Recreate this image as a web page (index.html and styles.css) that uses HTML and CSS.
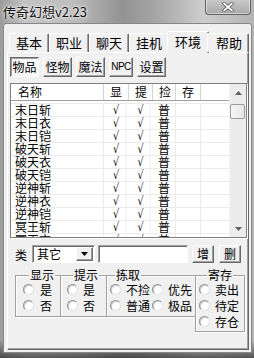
FILE: index.html
```html
<!DOCTYPE html>
<html lang="zh-CN">
<head>
    <meta charset="UTF-8">
    <title>传奇幻想v2.23</title>
    <link rel="stylesheet" href="styles.css">
</head>
<body>
<div class="win">
    <div class="titlebar">
        <span class="title">传奇幻想v2.23</span>
        <span class="close">
            <svg width="12" height="10" viewBox="0 0 12 10">
                <path d="M2 1.5 L10 8.5 M10 1.5 L2 8.5" stroke="#555" stroke-width="3.4" stroke-linecap="square"/>
                <path d="M2 1.5 L10 8.5 M10 1.5 L2 8.5" stroke="#fff" stroke-width="1.8" stroke-linecap="square"/>
            </svg>
        </span>
    </div>

    <div class="client">
        <div class="tabs">
            <div class="tab">基本</div>
            <div class="tab">职业</div>
            <div class="tab">聊天</div>
            <div class="tab">挂机</div>
            <div class="tab on">环境</div>
            <div class="tab last">帮助</div>
        </div>

        <div class="page">
            <div class="subtabs">
                <div class="sbtn on">物品</div>
                <div class="sbtn">怪物</div>
                <div class="sbtn">魔法</div>
                <div class="sbtn npc">NPC</div>
                <div class="sbtn">设置</div>
            </div>

            <div class="list">
                <div class="grid">
                    <div class="head">
                        <div class="c name">名称</div>
                        <div class="c col1">显</div>
                        <div class="c col2">提</div>
                        <div class="c col3">捡</div>
                        <div class="c col4">存</div>
                        <div class="c rest"></div>
                    </div>
                    <div class="rows" id="rows"></div>
                </div>
                <div class="sb">
                    <div class="arrow">
                        <svg width="7" height="4" viewBox="0 0 7 4"><path d="M0 4 L3.5 0 L7 4 Z" fill="#606060"/></svg>
                    </div>
                    <div class="thumb"></div>
                    <div class="track"></div>
                    <div class="arrow">
                        <svg width="7" height="4" viewBox="0 0 7 4"><path d="M0 0 L3.5 4 L7 0 Z" fill="#606060"/></svg>
                    </div>
                </div>
            </div>

            <div class="edit">
                <span class="lbl">类</span>
                <div class="combo">
                    <span class="combo-text">其它</span>
                    <span class="drop">
                        <svg width="7" height="4" viewBox="0 0 7 4"><path d="M0 0 L3.5 4 L7 0 Z" fill="#000"/></svg>
                    </span>
                </div>
                <div class="field"></div>
                <div class="btn">增</div>
                <div class="btn del">删</div>
            </div>

            <div class="groups">
                <fieldset class="g-show">
                    <legend>显示</legend>
                    <div class="opt"><span class="radio"></span>是</div>
                    <div class="opt"><span class="radio"></span>否</div>
                </fieldset>
                <fieldset class="g-tip">
                    <legend>提示</legend>
                    <div class="opt"><span class="radio"></span>是</div>
                    <div class="opt"><span class="radio"></span>否</div>
                </fieldset>
                <fieldset class="g-pick">
                    <legend>拣取</legend>
                    <div class="pick">
                        <div class="opt"><span class="radio"></span>不捡</div>
                        <div class="opt"><span class="radio"></span>优先</div>
                        <div class="opt"><span class="radio"></span>普通</div>
                        <div class="opt"><span class="radio"></span>极品</div>
                    </div>
                </fieldset>
                <fieldset class="g-store">
                    <legend>寄存</legend>
                    <div class="opt"><span class="radio"></span>卖出</div>
                    <div class="opt"><span class="radio"></span>待定</div>
                    <div class="opt"><span class="radio"></span>存仓</div>
                </fieldset>
            </div>
        </div>
    </div>
</div>

<script>
    // item rows of the list
    const items = ['末日斩', '末日衣', '末日铠', '破天斩', '破天衣', '破天铠', '逆神斩', '逆神衣', '逆神铠', '冥王斩', '冥王衣'];
    const rows = document.getElementById('rows');
    items.forEach(name => {
        const row = document.createElement('div');
        row.className = 'row';
        row.innerHTML = `
            <div class="c name">${name}</div>
            <div class="c col1 tick">√</div>
            <div class="c col2 tick">√</div>
            <div class="c col3 mid">普</div>
            <div class="c col4"></div>
            <div class="c rest"></div>
        `;
        rows.appendChild(row);
    });
</script>
</body>
</html>
```

FILE: styles.css
```css
* {
    box-sizing: border-box;
}
body {
    margin: 0;
    width: 254px;
    height: 358px;
    overflow: hidden;
    background: #7a7a7a;
    font-family: "Noto Sans CJK SC", sans-serif;
    font-size: 12px;
    color: #000;
}
.win {
    height: 358px;
    display: flex;
    flex-direction: column;
    background:
        linear-gradient(180deg, rgba(0,0,0,0) 0, rgba(0,0,0,0) 340px, rgba(40,40,40,.7) 358px),
        linear-gradient(90deg, #9c9c9c 0%, #c4c4c4 10%, #bebebe 28%, #939393 48%, #a3a3a3 60%, #cdcdcd 80%, #b4b4b4 100%);
}

/* title bar */
.titlebar {
    height: 23px;
    display: flex;
    justify-content: space-between;
    align-items: flex-start;
}
.title {
    padding: 4px 0 0 3px;
    font-size: 13px;
    line-height: 15px;
    color: #111;
    text-shadow: 0 0 4px #fff, 0 0 2px #fff;
}
.close {
    width: 46px;
    height: 16px;
    margin: -1px 3px 0 0;
    display: flex;
    align-items: center;
    justify-content: center;
    border: 1px solid #646464;
    border-top: none;
    border-radius: 0 0 4px 4px;
    background: linear-gradient(#cacaca, #a9a9a9);
    box-shadow: inset 0 0 0 1px rgba(255, 255, 255, .45);
}

/* window body */
.client {
    height: 330px;
    margin: 0 2px 0 3px;
    border: 1px solid #868686;
    border-radius: 3px 3px 0 0;
    background: #f0f0f0;
}
.tabs {
    display: flex;
    align-items: flex-end;
    height: 21px;
    margin: 7px 0 0 5px;
    position: relative;
    z-index: 1;
}
.tab {
    width: 40px;
    height: 19px;
    border: 1px solid;
    border-color: #fff #696969 transparent #fff;
    border-bottom: none;
    border-radius: 2px 2px 0 0;
    box-shadow: inset -1px 0 #a0a0a0;
    background: #f0f0f0;
    text-align: center;
    font-size: 13px;
    line-height: 17px;
}
.tab.on {
    width: 42px;
    height: 22px;
    margin: 0 -2px -1px;
    line-height: 19px;
}
.tab.last {
    width: 42px;
    padding-left: 2px;
}
.page {
    height: 298px;
    margin: 0 2px 2px 3px;
    border: 1px solid;
    border-color: #fff #696969 #696969 #fff;
    box-shadow: inset -1px -1px #a0a0a0;
}

/* sub buttons */
.subtabs {
    display: flex;
    gap: 4px;
    margin: 4px 0 0 2px;
}
.sbtn, .btn {
    width: 29px;
    height: 20px;
    border: 1px solid;
    border-color: #fff #696969 #696969 #fff;
    box-shadow: inset -1px -1px #a0a0a0;
    text-align: center;
    line-height: 18px;
}
.sbtn.on {
    border-color: #696969 #fff #fff #696969;
    box-shadow: inset 1px 1px #a0a0a0;
    background: #f8f8f8;
}
.sbtn.npc {
    width: 24px;
    font-family: "Liberation Sans", sans-serif;
    font-size: 10px;
    letter-spacing: -0.5px;
    overflow: hidden;
    white-space: nowrap;
}

/* list view */
.list {
    display: flex;
    width: 237px;
    height: 155px;
    margin: 6px 0 0 2px;
    border: 1px solid #7f7f7f;
    box-shadow: 1px 1px 0 #fff;
    background: #fff;
}
.grid {
    width: 218px;
    overflow: hidden;
}
.head, .row {
    display: flex;
}
.head {
    height: 17px;
    border-bottom: 1px solid #a0a0a0;
    line-height: 16px;
}
.rows {
    padding-top: 2px;
}
.row {
    height: 13px;
    border-top: 1px solid #ebebeb;
    line-height: 12px;
}
.c {
    flex: none;
    border-right: 1px solid #ebebeb;
    padding-left: 6px;
    white-space: nowrap;
}
.head .c {
    border-right-color: #d5d5d5;
}
.row .name {
    padding-left: 4px;
}
.head .name {
    padding-left: 7px;
}
.name { width: 93px; }
.col1 { width: 25px; }
.col2 { width: 24px; }
.col3 { width: 23px; }
.col4 { width: 25px; }
.rest { width: 28px; border-right: none; }
.tick, .mid {
    padding-left: 0;
    text-align: center;
}
.tick {
    font-family: "DejaVu Sans", sans-serif;
    font-size: 12px;
    transform: scaleX(0.8);
}

/* scroll bar */
.sb {
    width: 17px;
    display: flex;
    flex-direction: column;
    background: #ececec;
    border-left: 1px solid #f4f4f4;
}
.arrow {
    height: 17px;
    display: flex;
    align-items: center;
    justify-content: center;
}
.thumb {
    height: 15px;
    margin: 3px 1px 0 0;
    border: 1px solid #9a9a9a;
    border-radius: 2px;
    background: linear-gradient(90deg, #f6f6f6, #e6e6e6);
}
.track {
    flex: 1;
}

/* edit row */
.edit {
    display: flex;
    align-items: center;
    height: 18px;
    margin: 7px 0 0 7px;
}
.lbl {
    width: 12px;
    margin-right: 5px;
}
.combo {
    width: 63px;
    height: 18px;
    display: flex;
    align-items: center;
    justify-content: space-between;
    border: 1px solid;
    border-color: #a0a0a0 #fff #fff #a0a0a0;
    box-shadow: inset 1px 1px #696969;
    background: #fff;
    padding: 1px 1px 1px 4px;
}
.combo-text {
    line-height: 14px;
}
.drop {
    width: 17px;
    height: 14px;
    display: flex;
    align-items: center;
    justify-content: center;
    border: 1px solid;
    border-color: #fff #696969 #696969 #fff;
    box-shadow: inset -1px -1px #a0a0a0;
    background: #f0f0f0;
}
.field {
    width: 90px;
    height: 18px;
    margin-left: 3px;
    border: 1px solid;
    border-color: #a0a0a0 #fff #fff #a0a0a0;
    box-shadow: inset 1px 1px #696969;
    background: #fff;
}
.btn {
    width: 22px;
    height: 18px;
    margin-left: 4px;
    line-height: 16px;
}
.btn.del {
    margin-left: 5px;
}

/* group boxes */
.groups {
    display: flex;
    align-items: flex-start;
    margin: 6px 0 0 7px;
}
fieldset {
    margin: 0 0 0 -1px;
    padding: 0 0 3px 6px;
    min-inline-size: 0;
    border: 1px solid #a0a0a0;
    box-shadow: inset 1px 1px 0 #fff, 1px 1px 0 #fff;
}
legend {
    margin-left: 6px;
    padding: 0 1px;
    line-height: 12px;
}
.g-show {
    width: 46px;
    margin-left: 0;
    padding-left: 7px;
}
.g-tip {
    width: 47px;
}
.g-pick {
    width: 90px;
    padding-left: 3px;
}
.g-pick legend {
    margin-left: 5px;
}
.g-store {
    width: 50px;
    padding-left: 3px;
    padding-bottom: 2px;
}
.g-store legend {
    margin-left: 8px;
}
.opt {
    display: flex;
    align-items: center;
    gap: 5px;
    height: 16px;
    white-space: nowrap;
}
.g-show .opt {
    gap: 6px;
}
.pick {
    display: grid;
    grid-template-columns: 42px auto;
}
.radio {
    flex: none;
    width: 11px;
    height: 11px;
    border-radius: 50%;
    border: 1px solid;
    border-color: #909090 #e2e2e2 #e2e2e2 #909090;
    box-shadow: inset 1px 1px 0 #cfcfcf;
    background: #fff;
}
```
